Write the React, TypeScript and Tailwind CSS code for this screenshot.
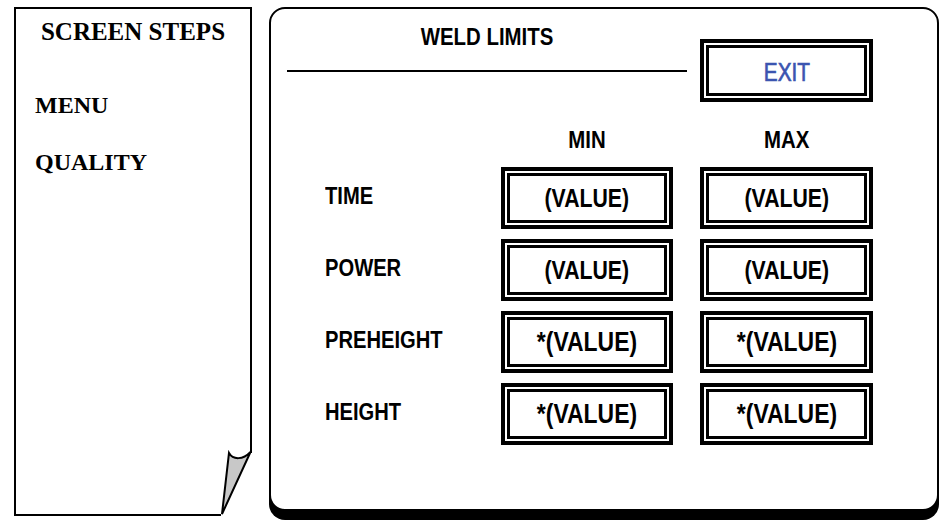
import React from "react";

const NARROW = "font-['Liberation_Sans',Arial,sans-serif]";

function ValueBox({ text, big, w }: { text: string; big?: boolean; w: string }) {
  return (
    <div className={`${w} h-[62px] border-4 border-black p-[2px] bg-white`}>
      <div className="w-full h-full border-[3px] border-black flex items-center justify-center">
        <span className={`inline-block scale-x-[0.85] ${NARROW} font-bold text-black ${big ? "text-[27px]" : "text-[25px]"} leading-none`}>{text}</span>
      </div>
    </div>
  );
}

const rows = [
  { label: "TIME", v: "(VALUE)", big: false },
  { label: "POWER", v: "(VALUE)", big: false },
  { label: "PREHEIGHT", v: "*(VALUE)", big: true },
  { label: "HEIGHT", v: "*(VALUE)", big: true },
];

export default function App() {
  return (
    <div className="relative w-[942px] h-[520px] bg-white overflow-hidden flex items-start">
      {/* Left panel */}
      <div className="ml-[14px] mt-[7px] w-[238px] h-[509px] border-2 border-black flex flex-col font-['Liberation_Serif',serif] font-bold text-black shrink-0">
        <div className="mt-[9px] text-center text-[25px] leading-[28px]">SCREEN STEPS</div>
        <div className="mt-[45px] pl-[19px] text-[24px] leading-[28px]">MENU</div>
        <div className="mt-[29px] pl-[19px] text-[24px] leading-[28px]">QUALITY</div>
      </div>

      {/* Page curl overlay */}
      <svg className="absolute left-[200px] top-[440px]" width="60" height="80" viewBox="200 440 60 80">
        <rect x="221" y="450.5" width="36" height="70" fill="#fff" />
        <path d="M229,453 C233,460 243,460 250.5,452 L222,514 Z" fill="#c8c8c8" stroke="#000" strokeWidth="2" strokeLinejoin="miter" />
        <line x1="251" y1="440" x2="251" y2="453" stroke="#000" strokeWidth="2" />
      </svg>

      {/* Right panel */}
      <div className="ml-[17px] mt-[7px] w-[670px] h-[504px] border-2 border-black rounded-[16px] bg-white shadow-[0px_9px_0_0_#000] shrink-0 flex flex-col">
        <div className="flex pl-[16px]">
          <div className="w-[400px] flex flex-col items-center">
            <div className={`inline-block scale-x-[0.85] ${NARROW} font-bold text-[24px] leading-[28px] mt-[14px] text-black`}>WELD LIMITS</div>
            <div className="w-full h-[2px] bg-black mt-[19px]" />
          </div>
          <div className="ml-[13px] mt-[30px] w-[173px] h-[63px] border-4 border-black p-[2px]">
            <div className="w-full h-full border-[3px] border-black flex items-center justify-center pt-[3px]">
              <span className={`inline-block scale-x-[0.8] ${NARROW} text-[26px] leading-none text-[#3b55b0] [-webkit-text-stroke:0.7px_#3b55b0]`}>EXIT</span>
            </div>
          </div>
        </div>

        <div className="flex pl-[230px] mt-[24px] h-[28px] items-center">
          <div className="w-[172px] flex justify-center">
            <span className={`inline-block scale-x-[0.85] ${NARROW} font-bold text-[24px] leading-[28px]`}>MIN</span>
          </div>
          <div className="ml-[27px] w-[173px] flex justify-center">
            <span className={`inline-block scale-x-[0.85] ${NARROW} font-bold text-[24px] leading-[28px]`}>MAX</span>
          </div>
        </div>

        <div className="flex flex-col gap-[10px] mt-[13px] pl-[54px]">
          {rows.map((r) => (
            <div key={r.label} className="flex items-center h-[62px]">
              <div className="w-[176px] pb-[5px]">
                <span className={`inline-block origin-left scale-x-[0.84] ${NARROW} font-bold text-[24px] leading-[28px] text-black`}>{r.label}</span>
              </div>
              <ValueBox text={r.v} big={r.big} w="w-[172px]" />
              <div className="w-[27px]" />
              <ValueBox text={r.v} big={r.big} w="w-[173px]" />
            </div>
          ))}
        </div>
      </div>
    </div>
  );
}
